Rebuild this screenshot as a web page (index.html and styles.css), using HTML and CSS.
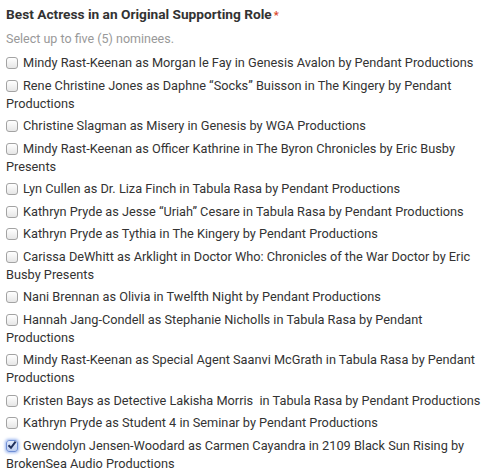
FILE: index.html
```html
<!DOCTYPE html>
<html lang="en">
<head>
    <meta charset="UTF-8">
    <meta name="viewport" content="width=device-width, initial-scale=1.0">
    <title>Best Actress in an Original Supporting Role</title>
    <link rel="stylesheet" href="styles.css">
</head>
<body>
    <div class="question">
        <p class="title">Best Actress in an Original Supporting Role<span class="req">*</span></p>
        <p class="hint">Select up to five (5) nominees.</p>
        <ul class="choices">
            <li><span class="box"></span>Mindy Rast-Keenan as Morgan le Fay in Genesis Avalon by Pendant Productions</li>
            <li><span class="box"></span>Rene Christine Jones as Daphne “Socks” Buisson in The Kingery by Pendant Productions</li>
            <li><span class="box"></span>Christine Slagman as Misery in Genesis by WGA Productions</li>
            <li><span class="box"></span>Mindy Rast-Keenan as Officer Kathrine in The Byron Chronicles by Eric Busby Presents</li>
            <li><span class="box"></span>Lyn Cullen as Dr. Liza Finch in Tabula Rasa by Pendant Productions</li>
            <li><span class="box"></span>Kathryn Pryde as Jesse “Uriah” Cesare in Tabula Rasa by Pendant Productions</li>
            <li><span class="box"></span>Kathryn Pryde as Tythia in The Kingery by Pendant Productions</li>
            <li><span class="box"></span>Carissa DeWhitt as Arklight in Doctor Who: Chronicles of the War Doctor by Eric Busby Presents</li>
            <li><span class="box"></span>Nani Brennan as Olivia in Twelfth Night by Pendant Productions</li>
            <li><span class="box"></span>Hannah Jang-Condell as Stephanie Nicholls in Tabula Rasa by Pendant Productions</li>
            <li><span class="box"></span>Mindy Rast-Keenan as Special Agent Saanvi McGrath in Tabula Rasa by Pendant Productions</li>
            <li><span class="box"></span>Kristen Bays as Detective Lakisha Morris &nbsp;in Tabula Rasa by Pendant Productions</li>
            <li><span class="box"></span>Kathryn Pryde as Student 4 in Seminar by Pendant Productions</li>
            <li><span class="box checked"><svg viewBox="0 0 12 12" width="12" height="12"><path d="M2.5 6.2 L5 8.8 L9.6 2.6" fill="none" stroke="#1f2f5c" stroke-width="2"/></svg></span>Gwendolyn Jensen-Woodard as Carmen Cayandra in 2109 Black Sun Rising by BrokenSea Audio Productions</li>
        </ul>
    </div>
</body>
</html>
```

FILE: styles.css
```css
body {
    margin: 0;
    background: #fff;
    font-family: Roboto, 'Liberation Sans', sans-serif;
    color: #333;
}
.question {
    padding: 5px 14px 0 6px;
}
.title {
    margin: 0;
    font-size: 13.7px;
    line-height: 18px;
    font-weight: bold;
    color: #333;
}
.req {
    color: #d9452b;
    font-size: 11px;
    margin-left: 2px;
}
.hint {
    margin: 5px 0 6px;
    font-size: 12.5px;
    line-height: 18px;
    color: #999;
}
.choices {
    list-style: none;
    margin: 0;
    padding: 0;
}
.choices li {
    font-size: 12.75px;
    line-height: 18px;
    margin-bottom: 4.5px;
}
.box {
    display: inline-block;
    vertical-align: -2px;
    width: 10px;
    height: 10px;
    margin-right: 5px;
    border: 1px solid #a3a3a3;
    border-radius: 3px;
    background: linear-gradient(#fff, #e6e6e6);
    position: relative;
}
.box.checked {
    border-color: #6f8fd6;
    background: linear-gradient(#e3ebfb, #bccdf0);
    box-shadow: 0 0 3px 1px #9db7ef;
}
.box svg {
    position: absolute;
    left: -1px;
    top: -2px;
}
```
